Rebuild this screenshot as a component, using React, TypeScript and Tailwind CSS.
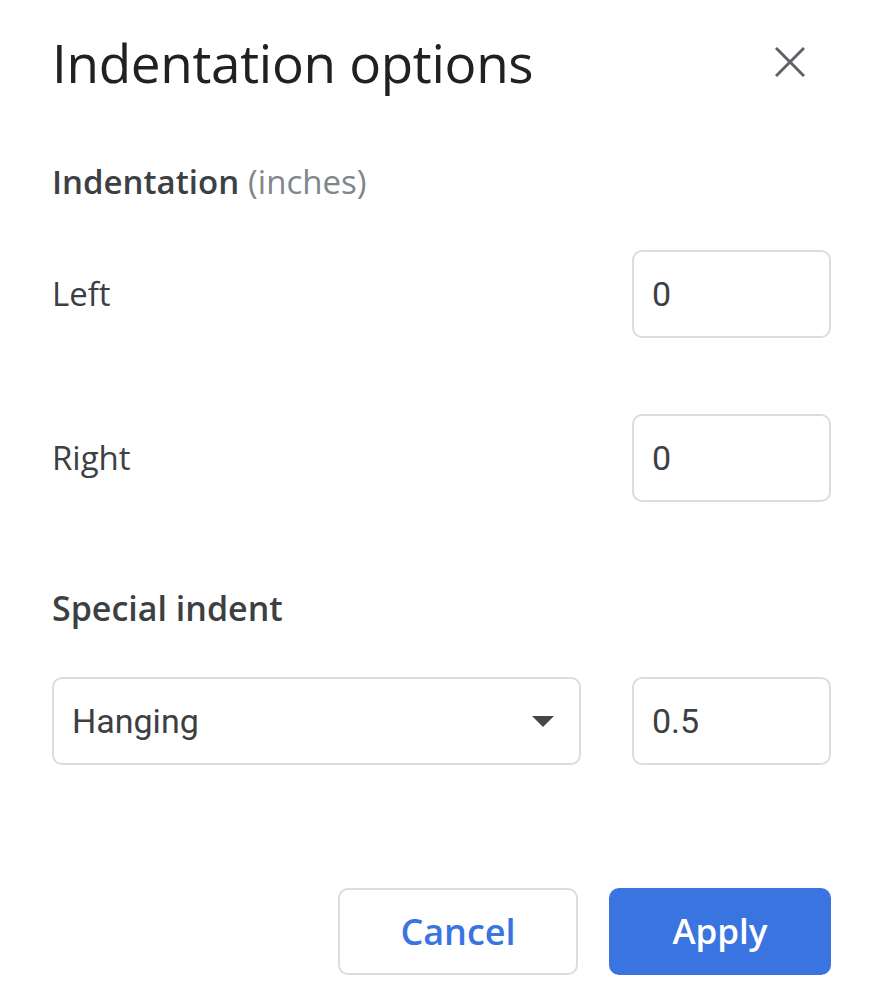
export default function App() {
  return (
    <div className="w-[876px] h-[998px] bg-white pl-[52px] pr-[45px] font-['Open_Sans',sans-serif] text-[#3c4043]">
      {/* header */}
      <div className="h-[124px] flex items-center justify-between">
        <h1 className="text-[53px] leading-none text-[#202124] tracking-[-0.3px]">Indentation options</h1>
        <button className="w-[48px] h-[48px] mr-[17px] flex items-center justify-center">
          <svg width="30" height="30" viewBox="0 0 30 30" fill="none" stroke="#5f6368" strokeWidth="3">
            <line x1="1" y1="1" x2="29" y2="29" />
            <line x1="29" y1="1" x2="1" y2="29" />
          </svg>
        </button>
      </div>

      <div className="mt-[28px] h-[60px] flex items-center text-[33px]">
        <span className="font-semibold">Indentation</span>
        <span className="ml-[9px] text-[#80868b]">(inches)</span>
      </div>

      <Row label="Left" value="0" className="mt-[38px]" />
      <Row label="Right" value="0" className="mt-[76px]" />

      <div className="mt-[76px] h-[60px] flex items-center text-[34px] font-semibold">Special indent</div>

      <div className="mt-[39px] flex gap-[51px]">
        <div className="w-[529px] h-[88px] border-2 border-[#dadce0] rounded-[10px] pl-[18px] pr-[25px] flex items-center justify-between font-['Roboto',sans-serif] text-[34px]">
          <span>Hanging</span>
          <svg width="22" height="11" viewBox="0 0 22 11">
            <path d="M0 0h22L11 11z" fill="#444746" />
          </svg>
        </div>
        <Field value="0.5" />
      </div>

      <div className="mt-[123px] flex justify-end gap-[31px] text-[35px] font-semibold">
        <button className="w-[240px] h-[87px] border-2 border-[#dadce0] rounded-[10px] text-[#3a74e0] text-[36px]">Cancel</button>
        <button className="w-[222px] h-[87px] rounded-[10px] bg-[#3a74e0] text-white">Apply</button>
      </div>
    </div>
  );
}

function Field({ value }: { value: string }) {
  return (
    <div className="w-[199px] h-[88px] border-2 border-[#dadce0] rounded-[10px] pl-[18px] flex items-center font-['Roboto',sans-serif] text-[34px]">
      {value}
    </div>
  );
}

function Row({ label, value, className }: { label: string; value: string; className: string }) {
  return (
    <div className={`flex items-center justify-between ${className}`}>
      <span className="text-[33px]">{label}</span>
      <Field value={value} />
    </div>
  );
}
